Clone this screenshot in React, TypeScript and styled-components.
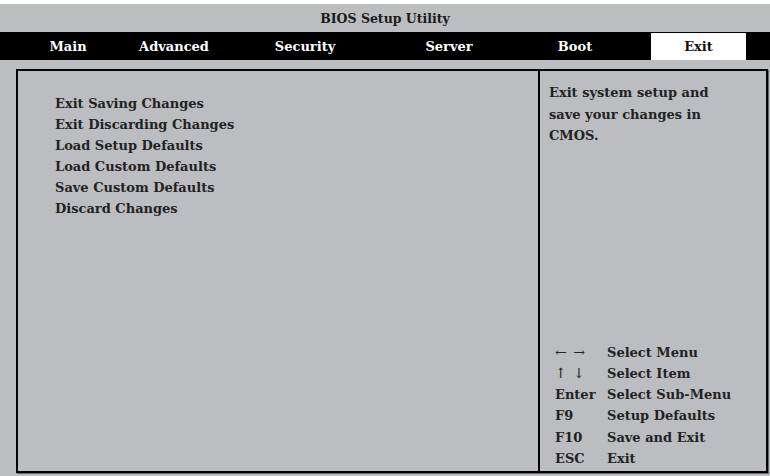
import React from "react";
import styled, { createGlobalStyle } from "styled-components";

const GlobalStyle = createGlobalStyle`
  html, body {
    margin: 0;
    padding: 0;
    background: #fff;
  }
  body {
    font-family: "DejaVu Serif", "Liberation Serif", serif;
  }
`;

const Screen = styled.div`
  width: 770px;
  height: 476px;
  box-sizing: border-box;
  padding-top: 4px;
  background: #fff;
  display: flex;
  flex-direction: column;
`;

const Frame = styled.div`
  flex: 1;
  background: #bcbdc1;
  display: flex;
  flex-direction: column;
`;

const TitleBar = styled.div`
  height: 28px;
  display: flex;
  align-items: center;
  justify-content: center;
  font-weight: bold;
  font-size: 12.5px;
  color: #1a1a1a;
`;

const MenuBar = styled.div`
  height: 28px;
  background: #000;
  display: flex;
  align-items: stretch;
`;

const Tab = styled.div<{ $left: number; $width: number; $active?: boolean }>`
  margin-left: ${(p) => p.$left}px;
  width: ${(p) => p.$width}px;
  display: flex;
  align-items: center;
  justify-content: center;
  font-weight: bold;
  font-size: 13px;
  color: ${(p) => (p.$active ? "#111" : "#fff")};
  background: ${(p) => (p.$active ? "#fff" : "transparent")};
  margin-top: ${(p) => (p.$active ? "1px" : "0")};
`;

const Body = styled.div`
  flex: 1;
  padding: 9px 2px 3px 16px;
  display: flex;
`;

const Panel = styled.div`
  flex: 1;
  border: 2px solid #000;
  box-shadow: 1px 1px 0 #6a6a6c;
  display: grid;
  grid-template-columns: 1fr 228px;
`;

const ItemList = styled.div`
  padding: 22px 0 0 37px;
  display: flex;
  flex-direction: column;
`;

const Item = styled.div`
  font-weight: bold;
  font-size: 13px;
  line-height: 21.1px;
  color: #222;
`;

const HelpColumn = styled.div`
  border-left: 2px solid #000;
  padding: 11px 0 2px 9px;
  display: flex;
  flex-direction: column;
  justify-content: space-between;
`;

const HelpText = styled.div`
  font-weight: bold;
  font-size: 13px;
  line-height: 21.5px;
  color: #222;
  width: 178px;
`;

const Legend = styled.div`
  display: grid;
  grid-template-columns: 52px 1fr;
  padding-left: 6px;
  font-weight: bold;
  font-size: 13px;
  line-height: 21.2px;
  color: #222;
`;

const KeyCell = styled.div<{ $light?: boolean }>`
  font-weight: ${(p) => (p.$light ? "normal" : "bold")};
  font-size: ${(p) => (p.$light ? "14px" : "inherit")};
  word-spacing: ${(p) => (p.$light ? "2px" : "0")};
`;

const tabs = [
  { label: "Main", left: 30, width: 76 },
  { label: "Advanced", left: 0, width: 136 },
  { label: "Security", left: 0, width: 126 },
  { label: "Server", left: 0, width: 162 },
  { label: "Boot", left: 0, width: 90 },
  { label: "Exit", left: 31, width: 95, active: true },
];

const items = [
  "Exit Saving Changes",
  "Exit Discarding Changes",
  "Load Setup Defaults",
  "Load Custom Defaults",
  "Save Custom Defaults",
  "Discard Changes",
];

const keys: { key: string; desc: string; light?: boolean }[] = [
  { key: "← →", desc: "Select Menu", light: true },
  { key: "↑ ↓", desc: "Select Item", light: true },
  { key: "Enter", desc: "Select Sub-Menu" },
  { key: "F9", desc: "Setup Defaults" },
  { key: "F10", desc: "Save and Exit" },
  { key: "ESC", desc: "Exit" },
];

const App: React.FC = () => {
  return (
    <>
      <GlobalStyle />
      <Screen>
        <Frame>
          <TitleBar>BIOS Setup Utility</TitleBar>
          <MenuBar>
            {tabs.map((t) => (
              <Tab key={t.label} $left={t.left} $width={t.width} $active={t.active}>
                {t.label}
              </Tab>
            ))}
          </MenuBar>
          <Body>
            <Panel>
              <ItemList>
                {items.map((i) => (
                  <Item key={i}>{i}</Item>
                ))}
              </ItemList>
              <HelpColumn>
                <HelpText>Exit system setup and save your changes in CMOS.</HelpText>
                <Legend>
                  {keys.map((k) => (
                    <React.Fragment key={k.key}>
                      <KeyCell $light={k.light}>{k.key}</KeyCell>
                      <div>{k.desc}</div>
                    </React.Fragment>
                  ))}
                </Legend>
              </HelpColumn>
            </Panel>
          </Body>
        </Frame>
      </Screen>
    </>
  );
};

export default App;
